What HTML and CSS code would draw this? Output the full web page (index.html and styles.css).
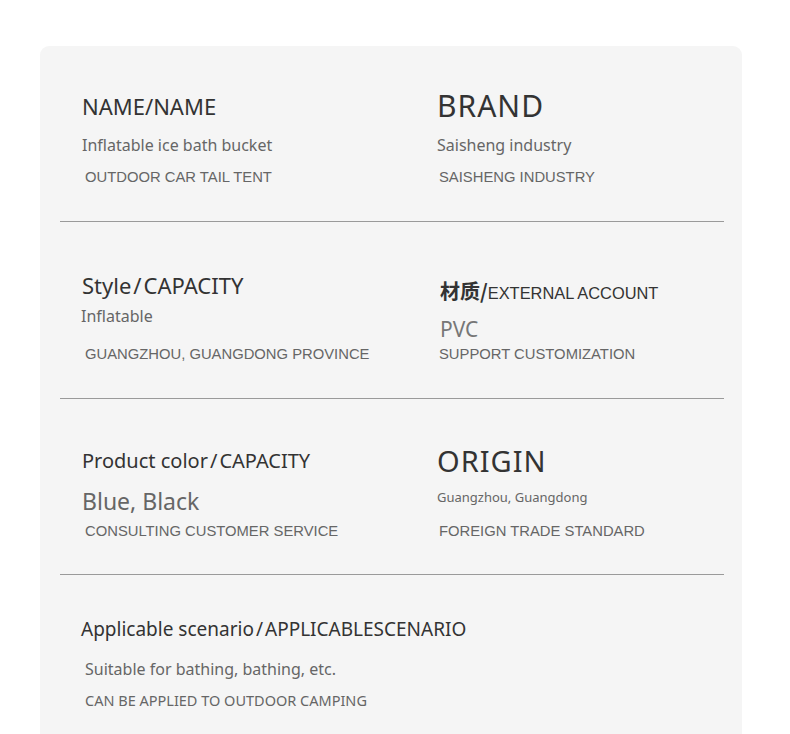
FILE: index.html
```html
<!DOCTYPE html>
<html lang="en">
<head>
<meta charset="utf-8">
<title>Product parameters</title>
<link rel="stylesheet" href="styles.css">
</head>
<body>
<div class="page">
  <div class="card">
    <section class="row">
      <div class="cell p48">
        <div class="title">NAME/NAME</div>
        <div class="sub m15">Inflatable ice bath bucket</div>
        <div class="en m8">OUTDOOR CAR TAIL TENT</div>
      </div>
      <div class="cell p48">
        <div class="big b30">BRAND</div>
        <div class="sub m15">Saisheng industry</div>
        <div class="en en-r m8">SAISHENG INDUSTRY</div>
      </div>
    </section>
    <section class="row tall">
      <div class="cell p51">
        <div class="title">Style<span class="sl">/</span>CAPACITY</div>
        <div class="sub m7 shift-l">Inflatable</div>
        <div class="en m14">GUANGZHOU, GUANGDONG PROVINCE</div>
      </div>
      <div class="cell p57">
        <div class="mixed"><span class="cn">材质/</span>EXTERNAL ACCOUNT</div>
        <div class="pvc m12">PVC</div>
        <div class="en en-r m1">SUPPORT CUSTOMIZATION</div>
      </div>
    </section>
    <section class="row">
      <div class="cell p50">
        <div class="title t20">Product color<span class="sl">/</span>CAPACITY</div>
        <div class="val m16">Blue, Black</div>
        <div class="en m6">CONSULTING CUSTOMER SERVICE</div>
      </div>
      <div class="cell p50">
        <div class="big">ORIGIN</div>
        <div class="small m12">Guangzhou, Guangdong</div>
        <div class="en en-r m10">FOREIGN TRADE STANDARD</div>
      </div>
    </section>
    <section class="row last">
      <div class="cell wide p42">
        <div class="title t19 shift-l">Applicable scenario<span class="sl">/</span>APPLICABLESCENARIO</div>
        <div class="sub m16 indent">Suitable for bathing, bathing, etc.</div>
        <div class="caps m7 indent">CAN BE APPLIED TO OUTDOOR CAMPING</div>
      </div>
    </section>
  </div>
</div>
</body>
</html>
```

FILE: styles.css
```css
* { box-sizing: border-box; }
html, body { margin: 0; padding: 0; background: #ffffff; }
body {
  font-family: "Noto Sans", "Noto Sans CJK SC", sans-serif;
  width: 790px;
  height: 734px;
  overflow: hidden;
}
.page {
  padding: 46px 48px 0 40px;
}
.card {
  background: #f5f5f5;
  border-radius: 9px 9px 0 0;
  padding: 0 18px 40px 20px;
  min-height: 720px;
}
.row {
  display: grid;
  grid-template-columns: 355px 1fr;
  height: 176px;
  border-bottom: 1px solid #9a9a9a;
  padding-left: 22px;
  align-items: start;
}
.row.tall { height: 177px; }
.row.last { border-bottom: none; display: block; }
.cell { display: flex; flex-direction: column; align-items: flex-start; }
.title, .sub, .en, .big, .mixed, .pvc, .val, .small, .caps {
  line-height: 24px;
  white-space: nowrap;
}
.title { font-size: 22px; color: #333; }
.title.t20 { font-size: 20px; }
.title.t19 { font-size: 19px; }
.sl { margin: 0 2px; }
.big { font-size: 29px; color: #333; letter-spacing: 1px; }
.big.b30 { font-size: 30px; }
.sub { font-size: 16px; color: #666; }
.val { font-size: 23px; color: #666; }
.pvc { font-size: 21px; color: #777; margin-left: 3px; }
.small { font-size: 13px; color: #666; }
.en {
  font-family: "Liberation Sans", Arial, sans-serif;
  font-size: 14.8px;
  color: #666;
  margin-left: 3px;
}
.en.en-r { margin-left: 2px; }
.caps { font-size: 14.5px; color: #666; }
.mixed {
  font-family: "Liberation Sans", Arial, sans-serif;
  font-size: 16.4px;
  color: #333;
  margin-left: 3px;
}
.mixed .cn {
  font-family: "Noto Sans CJK SC", sans-serif;
  font-weight: 700;
  font-size: 20px;
}
.shift-l { margin-left: -1px; }
.indent { margin-left: 3px; }
.p42 { padding-top: 42px; }
.p48 { padding-top: 48px; }
.p50 { padding-top: 50px; }
.p51 { padding-top: 51px; }
.p57 { padding-top: 57px; }
.m1 { margin-top: 1px; }
.m6 { margin-top: 6px; }
.m7 { margin-top: 7px; }
.m8 { margin-top: 8px; }
.m10 { margin-top: 10px; }
.m12 { margin-top: 12px; }
.m14 { margin-top: 14px; }
.m15 { margin-top: 15px; }
.m16 { margin-top: 16px; }
```
